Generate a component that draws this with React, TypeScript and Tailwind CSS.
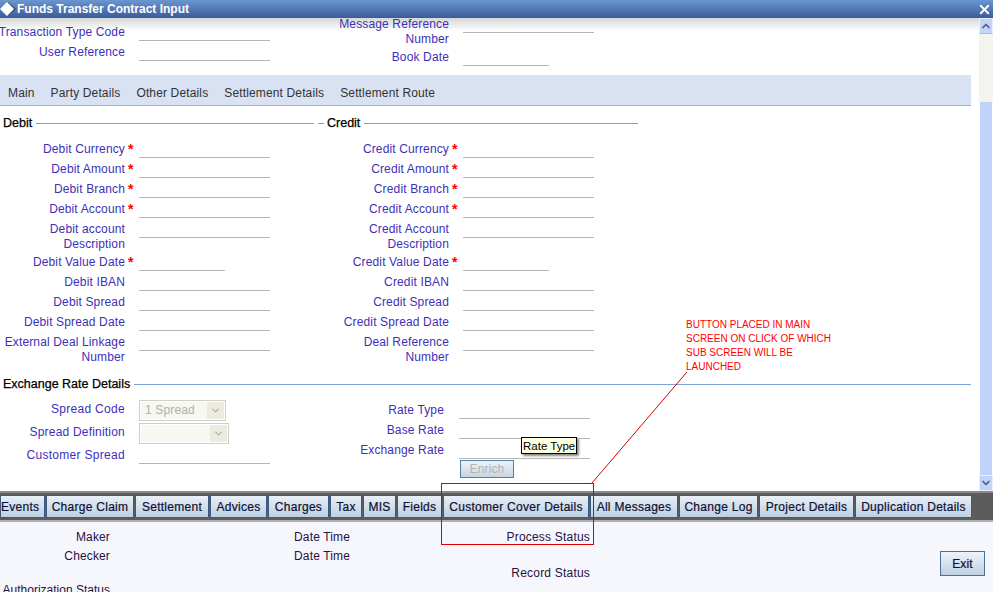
import { ChevronDown, ChevronUp, X } from "lucide-react";

interface FieldProps {
  label: string;
  extra?: string;
  required?: boolean;
  inputWidth?: number;
  labelClass?: string;
  starClass?: string;
  rowClass?: string;
}

const DEBIT_FIELDS: FieldProps[] = [
  { label: "Debit Currency", required: true },
  { label: "Debit Amount", required: true },
  { label: "Debit Branch", required: true },
  { label: "Debit Account", required: true },
  { label: "Debit account", extra: "Description", rowClass: "h-[33px]" },
  { label: "Debit Value Date", required: true, inputWidth: 86 },
  { label: "Debit IBAN" },
  { label: "Debit Spread" },
  { label: "Debit Spread Date" },
  { label: "External Deal Linkage", extra: "Number", rowClass: "h-[30px]" },
];

const CREDIT_FIELDS: FieldProps[] = [
  { label: "Credit Currency", required: true },
  { label: "Credit Amount", required: true },
  { label: "Credit Branch", required: true },
  { label: "Credit Account", required: true },
  { label: "Credit Account", extra: "Description", rowClass: "h-[33px]" },
  { label: "Credit Value Date", required: true, inputWidth: 86 },
  { label: "Credit IBAN" },
  { label: "Credit Spread" },
  { label: "Credit Spread Date" },
  { label: "Deal Reference", extra: "Number", rowClass: "h-[30px]" },
];

const RATE_FIELDS = ["Rate Type", "Base Rate", "Exchange Rate"];

const TABS = [
  "Main",
  "Party Details",
  "Other Details",
  "Settlement Details",
  "Settlement Route",
];

const TOOLBAR = [
  { label: "Events", w: "w-[45px]", pad: "justify-start" },
  { label: "Charge Claim", w: "w-[88px]" },
  { label: "Settlement", w: "w-[74px]" },
  { label: "Advices", w: "w-[57px]" },
  { label: "Charges", w: "w-[61px]" },
  { label: "Tax", w: "w-[32px]" },
  { label: "MIS", w: "w-[33px]" },
  { label: "Fields", w: "w-[45px]" },
  { label: "Customer Cover Details", w: "w-[146px]" },
  { label: "All Messages", w: "w-[88px]" },
  { label: "Change Log", w: "w-[79px]" },
  { label: "Project Details", w: "w-[95px]" },
  { label: "Duplication Details", w: "w-[117px]" },
];

function Field({
  label,
  extra,
  required,
  inputWidth = 131,
  labelClass = "w-[125px]",
  starClass = "w-[14px]",
  rowClass = "h-5",
}: FieldProps) {
  return (
    <div className={`flex items-start ${rowClass}`}>
      <div className={`pt-px text-right text-[#3d30b8] leading-[15px] ${labelClass}`}>
        {label}
        {extra && <div>{extra}</div>}
      </div>
      <div className={`${starClass} pl-[3px] text-[14px] text-[#ff0000] font-bold leading-[17px]`}>
        {required ? "*" : ""}
      </div>
      <div
        className="h-[17px] border-b border-[#b5b5b5]"
        style={{ width: inputWidth }}
      />
    </div>
  );
}

function Legend({ title, lineClass }: { title: string; lineClass: string }) {
  return (
    <div className="flex items-center h-[15px] gap-1 text-black text-[12.5px] tracking-normal">
      <span className="whitespace-nowrap [-webkit-text-stroke:0.25px_#000000]">
        {title}
      </span>
      <div className={`h-px bg-[#7ba2d6] ${lineClass}`} />
    </div>
  );
}

function FakeSelect({ value, width }: { value?: string; width: string }) {
  return (
    <div
      className={`flex h-[21px] border border-[#cfcfc3] bg-white p-px -mt-px ${width}`}
    >
      <div className="flex-1 bg-[#f8f8f3] pl-[4px] text-[#b0b0a8] leading-[17px]">
        {value}
      </div>
      <div className="flex w-[17px] items-center justify-center bg-[#ecebe2]">
        <ChevronDown size={11} strokeWidth={3} className="text-[#b4b4a8]" />
      </div>
    </div>
  );
}

function Scrollbar() {
  return (
    <div className="flex w-[14px] flex-col bg-[#f4f4ee]">
      <div className="flex h-[16px] items-center justify-center border border-[#e8eefc] bg-[#c4d4f8] border-b-[#a9bce6]">
        <ChevronUp size={12} strokeWidth={3.5} className="text-[#4d6185]" />
      </div>
      <div className="h-[68px]" />
      <div className="flex-1 border-x border-white bg-[#c2d3fb]" />
      <div className="flex h-[16px] items-center justify-center border border-[#e8eefc] bg-[#c4d4f8]">
        <ChevronDown size={12} strokeWidth={3.5} className="text-[#4d6185]" />
      </div>
    </div>
  );
}

export default function App() {
  return (
    <div
      className="relative flex h-[592px] w-[993px] flex-col overflow-hidden bg-white text-xs tracking-[0.14px]"
      style={{ fontFamily: '"Liberation Sans", Arial, sans-serif' }}
    >
      {/* title bar */}
      <div className="flex h-[18px] shrink-0 items-center bg-gradient-to-b from-[#6b97d0] to-[#3a5b9b]">
        <svg width="17" height="16" viewBox="0 0 17 16" className="shrink-0">
          <polygon points="8,1 16,8 8,15 1,8" fill="#3b4a66" />
          <polygon points="7,1 14,8 7,15 0,8" fill="#ffffff" />
        </svg>
        <span className="flex-1 font-bold tracking-normal text-white">
          Funds Transfer Contract Input
        </span>
        <X size={15} strokeWidth={3} className="mr-[1px] text-white" />
      </div>

      <div className="flex h-[473px] shrink-0">
        <div className="w-[979px] bg-[linear-gradient(#d4d8d6,#ffffff_13px)]">
          <div className="w-[971px]">
            {/* header fields */}
            <div className="flex h-[57px]">
              <div className="w-[324px] pt-[6px]">
                <div className="-ml-[10px]">
                  <Field label="Transaction Type Code" labelClass="w-[135px] whitespace-nowrap" />
                </div>
                <Field label="User Reference" />
              </div>
              <div className="-mt-[2px]">
                <Field label="Message Reference" extra="Number" rowClass="h-[33px]" />
                <Field label="Book Date" inputWidth={86} />
              </div>
            </div>

            {/* tabs */}
            <div className="flex h-[31px] items-center gap-4 border-b border-[#a5b0cc] bg-[#d9e2f2] pl-2 pt-[5px] text-[#333333]">
              {TABS.map((tab) => (
                <span key={tab}>{tab}</span>
              ))}
            </div>

            {/* debit and credit */}
            <div className="flex pt-[10px]">
              <div className="w-[324px]">
                <div className="pl-[3px]">
                  <Legend title="Debit" lineClass="w-[278px]" />
                </div>
              </div>
              <div className="-ml-[6px] flex items-center">
                <div className="mr-[3px] h-px w-[6px] bg-[#7ba2d6]" />
                <Legend title="Credit" lineClass="w-[274px]" />
              </div>
            </div>
            <div className="flex pt-[10px]">
              <div className="w-[324px]">
                {DEBIT_FIELDS.map((f) => (
                  <Field key={f.label} {...f} />
                ))}
              </div>
              <div>
                {CREDIT_FIELDS.map((f) => (
                  <Field key={f.label} {...f} />
                ))}
              </div>
            </div>

            {/* exchange rate */}
            <div className="mt-[13px] pl-[3px]">
              <Legend title="Exchange Rate Details" lineClass="flex-1" />
            </div>
            <div className="flex pt-[9px]">
              <div className="w-[324px] text-[#3d30b8]">
                <div className="flex h-[23px]">
                  <div className="w-[125px] pt-px text-right leading-[15px] tracking-[0.3px]">Spread Code</div>
                  <div className="w-[14px]" />
                  <FakeSelect value="1 Spread" width="w-[87px]" />
                </div>
                <div className="flex h-[23px]">
                  <div className="w-[125px] pt-px text-right leading-[15px] tracking-[0.2px]">Spread Definition</div>
                  <div className="w-[14px]" />
                  <FakeSelect width="w-[90px]" />
                </div>
                <Field label="Customer Spread" labelClass="w-[125px] tracking-[0.3px]" />
              </div>
              <div className="pt-px">
                {RATE_FIELDS.map((label) => (
                  <Field
                    key={label}
                    label={label}
                    labelClass="w-[120px]"
                    starClass="w-[15px]"
                  />
                ))}
                <button className="-mt-[2px] ml-[136px] block h-[18px] w-[54px] border border-[#5a7ca6] bg-gradient-to-b from-[#eef3f9] to-[#c5d5e6] text-[#b3b3b3]">
                  Enrich
                </button>
              </div>
            </div>
          </div>
        </div>
        <Scrollbar />
      </div>

      {/* sub screen buttons */}
      <div className="flex h-[31px] shrink-0 items-center gap-px border-t-2 border-b-2 border-t-[#8a8a8a] border-b-[#b0b0b0] bg-[#5c5c5c]">
        {TOOLBAR.map((b) => (
          <div
            key={b.label}
            className={`flex h-[23px] shrink-0 items-center whitespace-nowrap border border-[#3f5a7c] bg-gradient-to-b from-[#e8eff7] to-[#bdd0e3] tracking-[0.28px] text-[#101030] [-webkit-text-stroke:0.2px_#101030] ${b.pad ?? "justify-center"} ${b.w}`}
          >
            {b.label}
          </div>
        ))}
      </div>

      {/* audit footer */}
      <div className="flex min-h-0 flex-1 bg-[#f5f7fc] pt-[8px] tracking-[0.14px] text-[#2a1040]">
        <div className="flex w-[110px] flex-col items-end whitespace-nowrap leading-[15px]">
          <div className="h-[19px] shrink-0">Maker</div>
          <div className="h-[34px] shrink-0">Checker</div>
          <div className="shrink-0 tracking-normal">Authorization Status</div>
        </div>
        <div className="w-[240px] text-right leading-[15px]">
          <div className="h-[19px]">Date Time</div>
          <div>Date Time</div>
        </div>
        <div className="w-[240px] text-right leading-[15px] tracking-[0.2px]">
          <div className="h-[36px]">Process Status</div>
          <div>Record Status</div>
        </div>
        <div className="ml-auto mr-2 mt-[21px]">
          <button className="h-[25px] w-[45px] border border-[#4d7196] bg-gradient-to-b from-[#eef3f9] to-[#bed0e2] text-[#101030] [-webkit-text-stroke:0.2px_#101030]">
            Exit
          </button>
        </div>
      </div>

      {/* tooltip */}
      <div className="absolute left-[521px] top-[437px] h-[17px] w-[56px] whitespace-nowrap border border-black bg-[#ffffe1] pl-[1px] pt-px text-[11.5px] leading-[14px] tracking-normal text-black shadow-[2px_2px_2px_#888888]">
        Rate Type
      </div>

      {/* red annotation */}
      <div className="absolute left-[686px] top-[318px] text-[10px] leading-[14px] tracking-normal text-[#ff0000]">
        <div>BUTTON PLACED IN MAIN</div>
        <div>SCREEN ON CLICK OF WHICH</div>
        <div>SUB SCREEN WILL BE</div>
        <div>LAUNCHED</div>
      </div>
      <div className="absolute left-[441px] top-[483px] h-[62px] w-[153px] border border-[#e00000]" />
      <svg className="absolute left-[590px] top-[370px]" width="100" height="116">
        <line x1="2" y1="113" x2="97" y2="2" stroke="#e00000" strokeWidth="1" />
      </svg>
    </div>
  );
}
